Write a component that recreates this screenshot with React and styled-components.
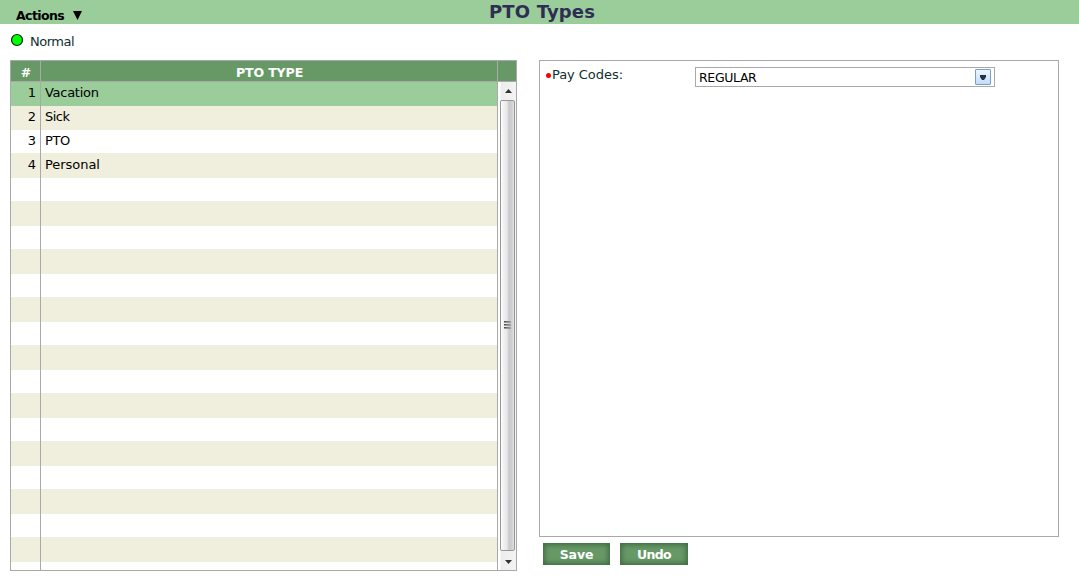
import React from "react";
import styled, { createGlobalStyle } from "styled-components";

const Global = createGlobalStyle`
  * { box-sizing: border-box; }
  body {
    margin: 0;
    background: #fff;
    color: #000;
    font: 13px/16px "DejaVu Sans", Verdana, sans-serif;
    overflow: hidden;
  }
`;

const Label = styled.span`
  letter-spacing: ${(p) => p.$track || 0}px;
  white-space: nowrap;
`;

const Page = styled.div`
  width: 1079px;
  height: 585px;
`;

const TopBar = styled.header`
  display: grid;
  grid-template-columns: 489px 1fr;
  height: 24px;
  background: #9acd9a;
`;

const ActionsMenu = styled.div`
  display: flex;
  align-items: center;
  gap: 9px;
  padding: 7px 0 0 16px;
  font-size: 12.5px;
  font-weight: bold;
`;

const Title = styled.h1`
  margin: 0;
  padding-top: 1px;
  font-size: 18px;
  line-height: 22px;
  color: #2e2e54;
`;

const Status = styled.div`
  display: flex;
  height: 36px;
  padding: 9px 0 0 10px;
  gap: 6px;
  color: #0f2f2f;
  line-height: 18px;
`;

const Content = styled.main`
  display: flex;
  gap: 22px;
  padding-left: 10px;
`;

const Grid = styled.section`
  display: flex;
  flex-direction: column;
  width: 507px;
  height: 511px;
  border: 1px solid #a9a9a9;
`;

const GridHead = styled.div`
  display: grid;
  grid-template-columns: 30px 457px 18px;
  height: 21px;
  border-bottom: 1px solid #a9a9a9;
  background: #669966;
  color: #fff;
  font-size: 12.5px;
  font-weight: bold;
  line-height: 24px;
  text-align: center;
`;

const HeadCell = styled.div`
  height: 20px;
  padding-left: 1px;
  border-right: ${(p) => (p.$last ? "0" : "1px solid #a9a9a9")};
`;

const GridBody = styled.div`
  display: flex;
  flex: 1;
  min-height: 0;
`;

const Rows = styled.div`
  width: 487px;
  border-right: 1px solid #a9a9a9;
  overflow: hidden;
`;

const Row = styled.div`
  display: grid;
  grid-template-columns: 30px 1fr;
  height: ${(p) => p.$height}px;
  background: ${(p) => p.$fill};
  line-height: ${(p) => (p.$height === 25 ? 24 : 22)}px;
`;

const NumberCell = styled.div`
  padding-right: 4px;
  border-right: 1px solid #a9a9a9;
  text-align: right;
`;

const NameCell = styled.div`
  padding-left: 4px;
`;

const Scrollbar = styled.div`
  display: flex;
  flex-direction: column;
  width: 18px;
  padding: 0 1px 0 2px;
  background: linear-gradient(90deg, #fff 2px, #ededed 3px, #f3f3f3 17px);
`;

const ScrollArrow = styled.div`
  display: flex;
  align-items: center;
  justify-content: center;
  height: ${(p) => p.$height}px;
  padding: ${(p) => (p.$down ? "2px 0 0 1px" : "0 0 0 1px")};
`;

const Thumb = styled.div`
  display: flex;
  flex-direction: column;
  align-items: center;
  justify-content: center;
  gap: 1px;
  height: 451px;
  padding-bottom: 2px;
  border: 1px solid #979797;
  border-radius: 2px;
  background: linear-gradient(90deg, #fff 0, #f3f3f3 2px, #e7e7ea 6px, #c9c9cd 8px, #d0d0d3 11px, #e2e2e2 13px);
`;

const Grip = styled.i`
  width: 7px;
  height: 2px;
  background: linear-gradient(90deg, #444, #aaa);
  border-bottom: 1px solid #999;
`;

const Details = styled.section`
  display: flex;
  flex-direction: column;
  gap: 6px;
  width: 520px;
`;

const Form = styled.div`
  display: flex;
  align-items: flex-start;
  height: 477px;
  padding: 6px 0 0 5px;
  border: 1px solid #a9a9a9;
`;

const FieldLabel = styled.label`
  display: flex;
  align-items: center;
  gap: 1px;
  width: 150px;
  padding-left: 1px;
  color: #0f2f2f;
`;

const Required = styled.i`
  width: 5px;
  height: 5px;
  margin-top: 1px;
  border-radius: 50%;
  background: red;
`;

const Select = styled.div`
  display: flex;
  align-items: flex-start;
  justify-content: space-between;
  width: 300px;
  height: 20px;
  padding: 1px 3px 0;
  border: 1px solid #a9a9a9;
  font-size: 12.5px;
  line-height: 18px;
`;

const DropButton = styled.div`
  display: flex;
  align-items: center;
  justify-content: center;
  width: 16px;
  height: 16px;
  border: 1px solid #7b9ccf;
  border-radius: 1px;
  background: linear-gradient(#eef5ff, #c3dcfb);
`;

const Buttons = styled.div`
  display: flex;
  gap: 10px;
  padding-left: 4px;
`;

const Button = styled.button`
  width: ${(p) => p.$width}px;
  height: 22px;
  padding: 1px 0 0;
  border: 0;
  background: #669966;
  box-shadow: inset 0 0 5px 2px #426b44;
  color: #fff;
  font: bold 12.5px/20px "DejaVu Sans", Verdana, sans-serif;
`;

const Triangle = ({ width, height, points, fill = "#000" }) => (
  <svg width={width} height={height} viewBox={`0 0 ${width} ${height}`}>
    <polygon points={points} fill={fill} />
  </svg>
);

const types = [
  { name: "Vacation", track: -0.28 },
  { name: "Sick", track: -0.5 },
  { name: "PTO", track: -0.4 },
  { name: "Personal", track: -0.05 },
];

const rows = Array.from({ length: 21 }, (_, i) => ({
  type: types[i],
  fill: i === 0 ? "#9acd9a" : i % 2 ? "#f0eedd" : "#fff",
  height: i < 2 ? 24 : i % 2 ? 25 : 23,
}));

export default function App() {
  return (
    <Page>
      <Global />
      <TopBar>
        <ActionsMenu>
          <Label $track={-0.6}>Actions</Label>
          <Triangle width={9} height={9} points="0,0 9,0 4.5,9" />
        </ActionsMenu>
        <Title>
          <Label $track={0.15}>PTO Types</Label>
        </Title>
      </TopBar>
      <Status>
        <svg width="14" height="14" viewBox="0 0 14 14">
          <circle cx="7" cy="7" r="5.5" fill="#0f0" stroke="#102010" strokeWidth="1.2" />
        </svg>
        <Label $track={-0.5}>Normal</Label>
      </Status>
      <Content>
        <Grid>
          <GridHead>
            <HeadCell>#</HeadCell>
            <HeadCell>
              <Label $track={-0.1}>PTO TYPE</Label>
            </HeadCell>
            <HeadCell $last />
          </GridHead>
          <GridBody>
            <Rows>
              {rows.map((row, i) => (
                <Row key={i} $height={row.height} $fill={row.fill}>
                  <NumberCell>{row.type ? i + 1 : null}</NumberCell>
                  <NameCell>
                    {row.type && <Label $track={row.type.track}>{row.type.name}</Label>}
                  </NameCell>
                </Row>
              ))}
            </Rows>
            <Scrollbar>
              <ScrollArrow $height={18}>
                <Triangle width={7} height={4} points="0,4 3.5,0 7,4" fill="#333" />
              </ScrollArrow>
              <Thumb>
                <Grip />
                <Grip />
                <Grip />
              </Thumb>
              <ScrollArrow $height={19} $down>
                <Triangle width={7} height={4} points="0,0 7,0 3.5,4" fill="#333" />
              </ScrollArrow>
            </Scrollbar>
          </GridBody>
        </Grid>
        <Details>
          <Form>
            <FieldLabel>
              <Required />
              <Label $track={-0.05}>Pay Codes:</Label>
            </FieldLabel>
            <Select>
              <Label $track={-0.35}>REGULAR</Label>
              <DropButton>
                <Triangle width={6} height={5} points="0,0 6,0 6,2 4,5 2,5 0,2" fill="#203348" />
              </DropButton>
            </Select>
          </Form>
          <Buttons>
            <Button $width={67}>
              <Label $track={-0.1}>Save</Label>
            </Button>
            <Button $width={68}>
              <Label $track={-0.6}>Undo</Label>
            </Button>
          </Buttons>
        </Details>
      </Content>
    </Page>
  );
}
